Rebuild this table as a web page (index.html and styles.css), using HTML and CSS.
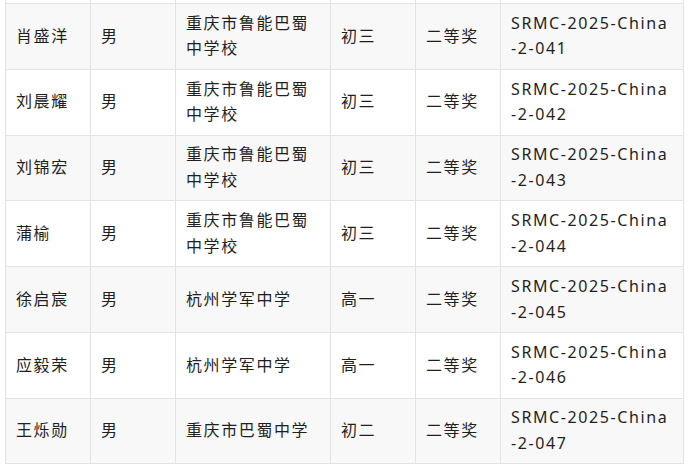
FILE: index.html
```html
<!DOCTYPE html>
<html lang="zh-CN">
<head>
<meta charset="utf-8">
<title>获奖名单</title>
<link rel="stylesheet" href="styles.css">
</head>
<body>
<table class="awards">
  <colgroup>
    <col class="c-name"><col class="c-sex"><col class="c-school"><col class="c-grade"><col class="c-prize"><col class="c-code">
  </colgroup>
  <tbody>
    <tr class="cut"><td></td><td></td><td></td><td></td><td></td><td></td></tr>
    <tr class="alt"><td>肖盛洋</td><td>男</td><td>重庆市鲁能巴蜀中学校</td><td>初三</td><td>二等奖</td><td>SRMC-2025-China-2-041</td></tr>
    <tr><td>刘晨耀</td><td>男</td><td>重庆市鲁能巴蜀中学校</td><td>初三</td><td>二等奖</td><td>SRMC-2025-China-2-042</td></tr>
    <tr class="alt"><td>刘锦宏</td><td>男</td><td>重庆市鲁能巴蜀中学校</td><td>初三</td><td>二等奖</td><td>SRMC-2025-China-2-043</td></tr>
    <tr><td>蒲榆</td><td>男</td><td>重庆市鲁能巴蜀中学校</td><td>初三</td><td>二等奖</td><td>SRMC-2025-China-2-044</td></tr>
    <tr class="alt"><td>徐启宸</td><td>男</td><td>杭州学军中学</td><td>高一</td><td>二等奖</td><td>SRMC-2025-China-2-045</td></tr>
    <tr><td>应毅荣</td><td>男</td><td>杭州学军中学</td><td>高一</td><td>二等奖</td><td>SRMC-2025-China-2-046</td></tr>
    <tr class="alt"><td>王烁勋</td><td>男</td><td>重庆市巴蜀中学</td><td>初二</td><td>二等奖</td><td>SRMC-2025-China-2-047</td></tr>
  </tbody>
</table>
</body>
</html>
```

FILE: styles.css
```css
html, body {
  margin: 0;
  padding: 0;
  background: #ffffff;
}

body {
  padding-left: 5px;
  font-family: "Noto Sans", "Noto Sans CJK SC", sans-serif;
  font-size: 16px;
  line-height: 1.6;
  letter-spacing: 1.6px;
  color: #1f1f1f;
}

.awards {
  border-collapse: collapse;
  table-layout: fixed;
  width: 678px;
}

.c-name, .c-sex, .c-grade, .c-prize { width: 85px; }
.c-school { width: 155px; }
.c-code { width: 183px; }

.awards td {
  border: 1px solid #e3e3e3;
  padding: 6.8px 10px;
  vertical-align: middle;
  word-break: break-all;
  text-align: left;
}

.awards tr.alt td {
  background: #f8f8f8;
}

.awards tr.cut td {
  border-top: none;
  padding: 0;
  height: 3px;
  line-height: 0;
}
```
